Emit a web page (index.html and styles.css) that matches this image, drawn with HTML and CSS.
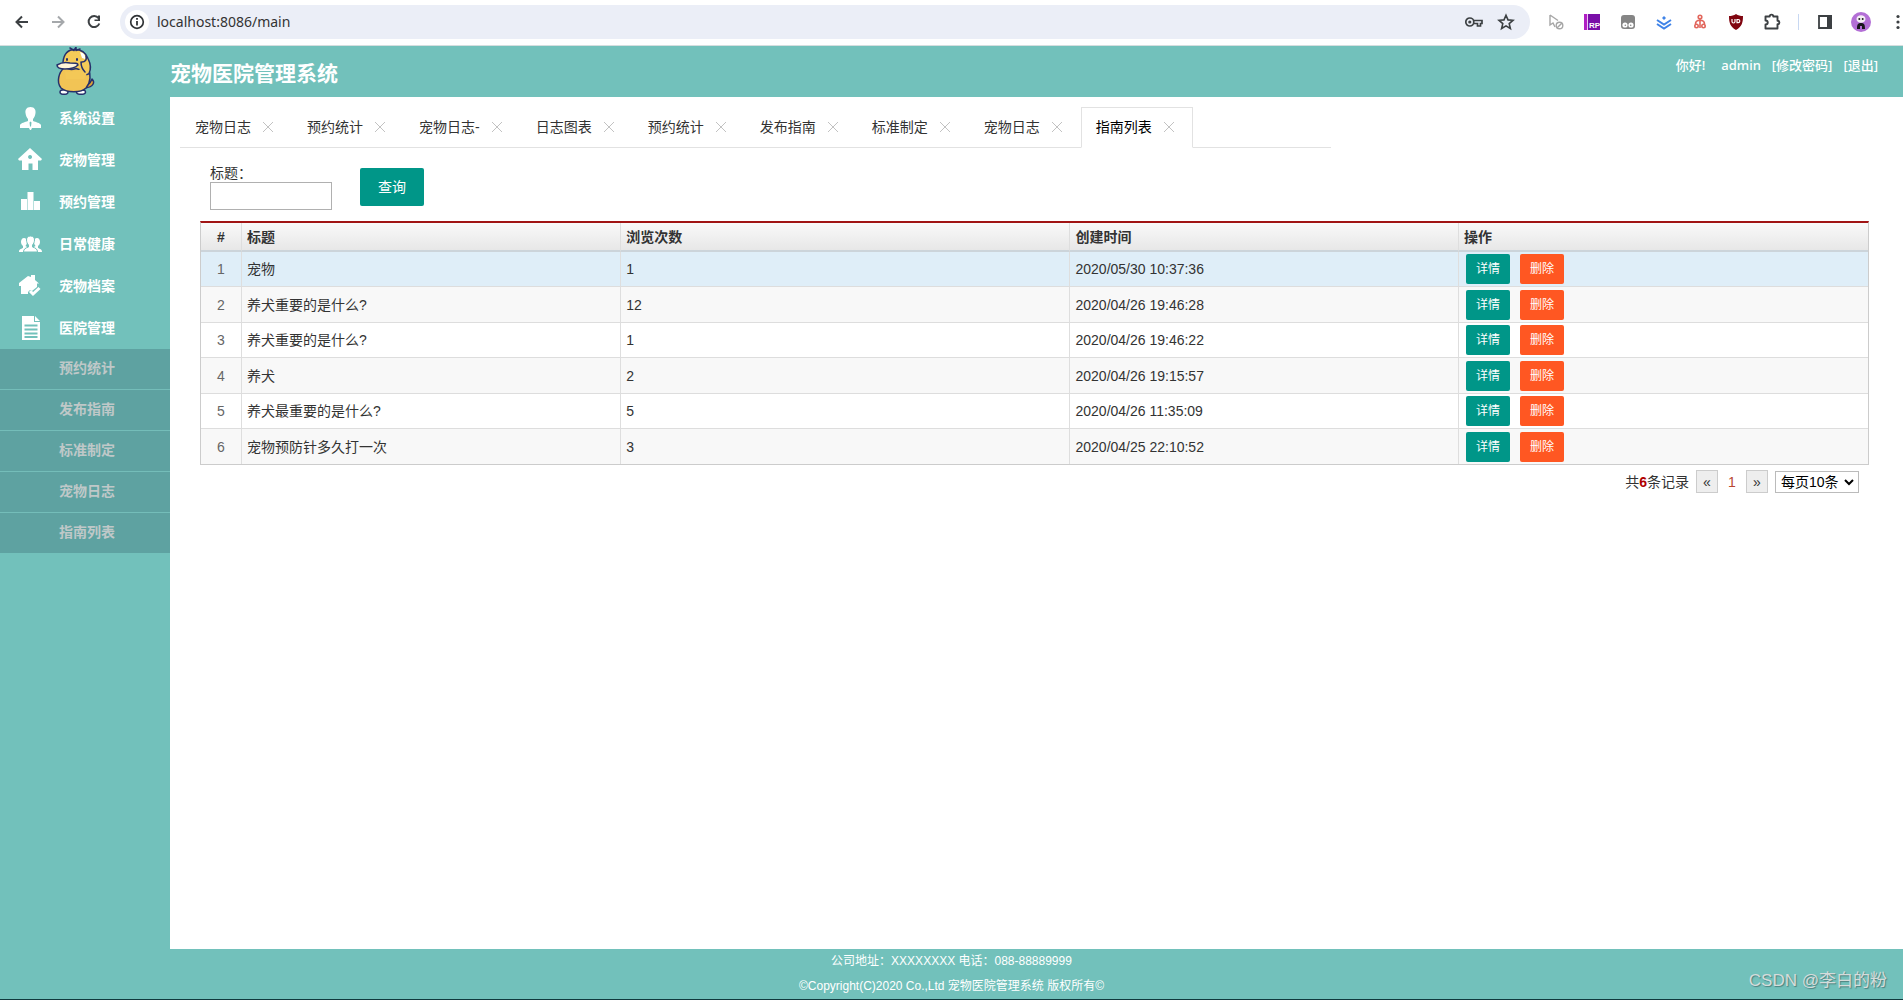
FILE: index.html
```html
<!DOCTYPE html>
<html lang="zh-CN">
<head>
<meta charset="utf-8">
<title>宠物医院管理系统</title>
<link rel="stylesheet" href="styles.css">
</head>
<body>
<div class="toolbar">
  <button class="tool" aria-label="后退"><svg viewBox="0 0 20 20"><path d="M16 10H5M10 4.500 4.500 10l5.500 5.500" fill="none" stroke="#3c4043" stroke-width="2"/></svg></button>
  <button class="tool" aria-label="前进"><svg viewBox="0 0 20 20"><path d="M4 10h11M10 4.500l5.500 5.500-5.500 5.500" fill="none" stroke="#a5a8ab" stroke-width="2"/></svg></button>
  <button class="tool" aria-label="刷新"><svg viewBox="0 0 20 20"><path d="M14.500 6.200A5.500 5.500 0 1 0 15.300 11.500" fill="none" stroke="#3c4043" stroke-width="2"/><path d="M16 3.500V9h-5.500V7.500H14V3.500z" fill="#3c4043"/></svg></button>
  <div class="omnibox">
    <span class="site-info"><svg viewBox="0 0 20 20"><circle cx="10" cy="10" r="6.300" fill="none" stroke="#303336" stroke-width="1.700"/><path d="M10 9v4.500M10 6v1.800" stroke="#303336" stroke-width="1.800"/></svg></span>
    <input class="url" type="text" value="localhost:8086/main" aria-label="地址">
    <svg class="glyph" viewBox="0 0 20 20"><g fill="none" stroke="#3c4043" stroke-width="1.700"><circle cx="5.800" cy="10" r="4"/><path d="M9.500 8.500H18v3h-1.500v2.500h-3v-2.500H9.500"/></g><circle cx="5.800" cy="10" r="1.600" fill="#3c4043"/></svg>
    <svg class="glyph" viewBox="0 0 20 20"><path d="M10 3.300l2 4.600 5 .4-3.800 3.300 1.200 4.900-4.400-2.600-4.400 2.600 1.200-4.900L3 8.300l5-.4z" fill="none" stroke="#3c4043" stroke-width="1.600"/></svg>
  </div>
  <button class="tool" aria-label="指针扩展"><svg viewBox="0 0 20 20"><g fill="none" stroke="#a6a6a6" stroke-width="1.400"><path d="M4 3v10l3-2 2 4M4 3l8 5.500"/><circle cx="13.500" cy="13.500" r="3.300"/><path d="M11.200 15.800l4.600-4.600"/></g></svg></button>
  <button class="tool" aria-label="RP"><svg viewBox="0 0 20 20"><path d="M2 2h16v16H2z" fill="#7a0fa8"/><path d="M2 2h3v16H2z" fill="#b01fc4"/><path d="M5.500 2v16" stroke="#ecc6f5"/><text x="7" y="16" class="rp">RP</text></svg></button>
  <button class="tool" aria-label="脚本扩展"><svg viewBox="0 0 20 20"><rect x="3" y="3" width="14" height="14" rx="3" fill="#858585"/><circle cx="7" cy="13" r="2.600" fill="#fff"/><circle cx="13" cy="13" r="2.600" fill="#fff"/><circle cx="7.300" cy="13.200" r=".8" fill="#858585"/><circle cx="12.700" cy="13.200" r=".8" fill="#858585"/></svg></button>
  <button class="tool" aria-label="下载扩展"><svg viewBox="0 0 20 20"><g fill="none" stroke="#3f83e8" stroke-width="2"><path d="M3 8l7 4.500L17 8M3 12l7 4.500 7-4.500"/></g><path d="M10 4l2 2-2 2-2-2z" fill="#3f83e8"/></svg></button>
  <button class="tool" aria-label="节点扩展"><svg viewBox="0 0 20 20"><g fill="none" stroke="#e2665c" stroke-width="1.600"><circle cx="10" cy="5" r="1.800"/><path d="M10 7v9M5.500 12c0-5 9-5 9 0"/><circle cx="6.500" cy="14" r="1.700"/><circle cx="13.500" cy="14" r="1.700"/></g></svg></button>
  <button class="tool" aria-label="拦截扩展"><svg viewBox="0 0 20 20"><path d="M10 2c2 1.500 4.500 2 7 2 0 6.500-1 10.500-7 14C4 14.500 3 10.500 3 4c2.500 0 5-.5 7-2z" fill="#800610"/><path d="M6 7v2.500a1.500 1.500 0 0 0 3 0V7M11 7.500v3.200h1.200a1.600 1.600 0 0 0 0-3.200z" fill="none" stroke="#fff" stroke-width="1.200"/></svg></button>
  <button class="tool" aria-label="扩展程序"><svg viewBox="0 0 20 20"><path d="M3.500 4.500h4.200c0-2.500 3.600-2.500 3.600 0h4.200v4.200c2.500 0 2.500 3.600 0 3.600v4.200h-12v-4c3 0 3-4 0-4z" fill="none" stroke="#3c4043" stroke-width="1.900" stroke-linejoin="round"/></svg></button>
  <span class="divider"></span>
  <button class="tool" aria-label="侧边栏"><svg viewBox="0 0 20 20"><path d="M4 4h12v12H4z" fill="none" stroke="#3c4043" stroke-width="1.800"/><path d="M12 3h5v14h-5z" fill="#3c4043"/></svg></button>
  <button class="tool" aria-label="个人资料"><svg viewBox="0 0 20 20"><circle cx="10" cy="10" r="10" fill="#b36fd6"/><ellipse cx="10" cy="7" rx="4.500" ry="3.800" fill="#f4eef5"/><circle cx="8.300" cy="7" r="1" fill="#222"/><circle cx="11.700" cy="7" r="1" fill="#222"/><path d="M6 17c0-4 .5-6 4-6s4 2 4 6h-3v-3H9v3z" fill="#19161c"/></svg></button>
  <button class="tool tool-edge" aria-label="菜单"><svg viewBox="0 0 16 20"><g fill="#3c4043"><circle cx="11" cy="4.500" r="1.600"/><circle cx="11" cy="10" r="1.600"/><circle cx="11" cy="15.500" r="1.600"/></g></svg></button>
</div>

<header class="header">
  <div class="logo"><svg viewBox="0 0 40 48">
    <g stroke="#26306b" stroke-width="1.500" stroke-linejoin="round" stroke-linecap="round">
      <path d="M30 38c4 0 5-4 6-6 3 3 2 8-7 9z" fill="#e0a233"/>
      <ellipse cx="8" cy="45" rx="4" ry="2.300" fill="#fff"/><ellipse cx="25" cy="45" rx="4.500" ry="2.300" fill="#fff"/>
      <path d="M8 21c-5 4-8 14-3 20 6 5 20 5 25 0 5-6 5-14 2-20z" fill="#f2c455"/>
      <path d="M7 15C8 6 13 2.500 19 2.500c7 0 11 4 13 9 3 6 3 11 1 15-2 2-5 1-7-3l-6-2C13 24 7 21 7 15z" fill="#f6cb58" />
      <path d="M9 24c4 1 14 1 16-3l6 5-3 6H10z" fill="#f4c857" stroke="none"/>
      <path d="M24 5c4 1 6 4 5 7l-3-1z" fill="#fff" stroke="none"/>
      <path d="M1 18c5-3 9-3 13-2 5 0 8 0 8 2-3 3-8 4-13 4-5 0-8-1-8-4z" fill="#fff4d8"/>
      <path d="M30 9c1 4-1 6-4 6M25 15c0 5 2 8 4 10M14 1l4 2.500L20 0l0 3.500L24 2" fill="none"/>
      <path d="M11 12v1M21 12v1" stroke-width="2"/>
    </g></svg></div>
  <h1 class="title">宠物医院管理系统</h1>
  <div class="user"><span>你好!</span><span class="name">admin</span><a href="#">[修改密码]</a><a href="#">[退出]</a></div>
</header>

<div class="body">
  <nav class="sidebar">
    <a class="item" href="#"><svg viewBox="0 0 24 24"><path d="M12.500 1c4 0 5.500 3 5 6-.3 3-1.500 5-2.500 6v2c3 1 7 2 8 4v3h-9l-1 2h-1l-1-2H2v-3c1-2 5-3 8-4v-2c-1-1-2.200-3-2.500-6-.5-3 1-6 5-6z"/><path class="cut" d="M12.500 15.500l1 1-.5 4h-1l-.500-4z"/></svg>系统设置</a>
    <a class="item" href="#"><svg viewBox="0 0 24 24"><path fill-rule="evenodd" d="M12 0l12 11-1 1.500h-3V22h-5.500v-6.500h-4V22H4v-9.500H1L0 11zM12 7a2 2 0 1 0 .1 0z"/></svg>宠物管理</a>
    <a class="item" href="#"><svg viewBox="0 0 24 24"><path d="M3 9h6v11H3zM9.500 2h6v18h-6zM16 11h6v9h-6z"/></svg>预约管理</a>
    <a class="item" href="#"><svg viewBox="0 0 24 24"><path d="M6 6c2 0 3 2 3 4s-1 3-1.500 4c1 .6 2 1 2 2L6 20H1c0-3 2-3 4-4v-2c-1-1-2-2-2-4s1-4 3-4zM19 6c-2 0-3 2-3 4s1 3 1.500 4c-1 .6-2 1-2 2l3.500 4h5c0-3-2-3-4-4v-2c1-1 2-2 2-4s-1-4-3-4z"/><path class="ring" d="M12.500 4c3 0 4 2 4 4s-1 4-2 5v2c3 1 5 2 5 5H5.500c0-3 2-4 5-5v-2c-1-1-2-3-2-5s1-4 4-4z"/></svg>日常健康</a>
    <a class="item" href="#"><svg viewBox="0 0 24 24"><path d="M10 2l3 1V1h4v5l4 3.500h-2V13l-5 4-2-1-2 2v2H3v-8H1V9z"/><path d="M12 17l3 3 6.500-6" fill="none" stroke="#fff" stroke-width="3"/></svg>宠物档案</a>
    <a class="item" href="#"><svg viewBox="0 0 24 24"><path d="M4 0h12v6h6v18H4zM17 0l5 5h-5z"/><path class="lines" d="M6.500 9.500h13M6.500 13.500h13M6.500 17.500h13M6.500 21h13"/></svg>医院管理</a>
    <div class="submenu">
      <a href="#">预约统计</a><a href="#">发布指南</a><a href="#">标准制定</a><a href="#">宠物日志</a><a href="#">指南列表</a>
    </div>
  </nav>

  <main class="main">
    <ul class="tabs">
      <li>宠物日志<button aria-label="关闭"></button></li>
      <li>预约统计<button aria-label="关闭"></button></li>
      <li>宠物日志-<button aria-label="关闭"></button></li>
      <li>日志图表<button aria-label="关闭"></button></li>
      <li>预约统计<button aria-label="关闭"></button></li>
      <li>发布指南<button aria-label="关闭"></button></li>
      <li>标准制定<button aria-label="关闭"></button></li>
      <li>宠物日志<button aria-label="关闭"></button></li>
      <li class="active">指南列表<button aria-label="关闭"></button></li>
    </ul>
    <form class="search">
      <div class="field"><label for="q">标题：</label><input id="q" type="text"></div>
      <button class="btn btn-query" type="button">查询</button>
    </form>
    <table class="grid">
      <colgroup><col class="c-no"><col class="c-title"><col class="c-views"><col class="c-time"><col></colgroup>
      <thead><tr><th>#</th><th>标题</th><th>浏览次数</th><th>创建时间</th><th>操作</th></tr></thead>
      <tbody>
        <tr class="selected"><td>1</td><td>宠物</td><td>1</td><td>2020/05/30 10:37:36</td><td><div class="ops"><button class="btn">详情</button><button class="btn btn-danger">删除</button></div></td></tr>
        <tr><td>2</td><td>养犬重要的是什么?</td><td>12</td><td>2020/04/26 19:46:28</td><td><div class="ops"><button class="btn">详情</button><button class="btn btn-danger">删除</button></div></td></tr>
        <tr><td>3</td><td>养犬重要的是什么?</td><td>1</td><td>2020/04/26 19:46:22</td><td><div class="ops"><button class="btn">详情</button><button class="btn btn-danger">删除</button></div></td></tr>
        <tr><td>4</td><td>养犬</td><td>2</td><td>2020/04/26 19:15:57</td><td><div class="ops"><button class="btn">详情</button><button class="btn btn-danger">删除</button></div></td></tr>
        <tr><td>5</td><td>养犬最重要的是什么?</td><td>5</td><td>2020/04/26 11:35:09</td><td><div class="ops"><button class="btn">详情</button><button class="btn btn-danger">删除</button></div></td></tr>
        <tr><td>6</td><td>宠物预防针多久打一次</td><td>3</td><td>2020/04/25 22:10:52</td><td><div class="ops"><button class="btn">详情</button><button class="btn btn-danger">删除</button></div></td></tr>
      </tbody>
    </table>
    <div class="pager">
      <span>共<b>6</b>条记录</span>
      <button aria-label="上一页">«</button><span class="current">1</span><button aria-label="下一页">»</button>
      <div class="size"><select aria-label="每页条数"><option>每页10条</option></select><svg viewBox="0 0 10 8"><path d="M1 2l4 4 4-4" fill="none" stroke="#000" stroke-width="2"/></svg></div>
    </div>
  </main>
</div>

<footer class="footer">
  <p>公司地址：XXXXXXXX 电话：088-88889999</p>
  <p>©Copyright(C)2020 Co.,Ltd 宠物医院管理系统 版权所有©</p>
  <span class="watermark">CSDN @李白的粉</span>
</footer>
</body>
</html>
```
FILE: styles.css
```css
* { box-sizing: border-box; }

body {
  margin: 0;
  min-height: 100vh;
  display: flex;
  flex-direction: column;
  background: #72c1bb;
  color: #333;
  font: 14px/20px "Liberation Sans", "Noto Sans CJK SC", sans-serif;
}

button, input, select { font: inherit; color: inherit; margin: 0; }
button { border: 0; padding: 0; background: none; }
a { color: inherit; text-decoration: none; }
svg { display: block; }

/* Browser bar */
.toolbar {
  display: flex;
  align-items: center;
  gap: 16px;
  height: 46px;
  padding: 0 0 2px 12px;
  background: #fff;
  border-bottom: 1px solid #d5dedf;
}
.tool { flex: none; width: 20px; height: 20px; }
.tool-edge { width: 16px; }
.rp { font: bold 8px "Liberation Sans", sans-serif; fill: #fff; }
.divider { width: 1px; height: 16px; background: #c8d8f2; }
.omnibox {
  flex: 1;
  display: flex;
  align-items: center;
  gap: 12px;
  height: 34px;
  padding: 0 14px 0 5px;
  border-radius: 17px;
  background: #ebeef7;
}
.site-info { padding: 2px; border-radius: 12px; background: #fff; }
.site-info svg, .glyph { width: 20px; height: 20px; }
.url {
  flex: 1;
  margin-left: -4px;
  padding: 0;
  border: 0;
  background: none;
  font: 14px/20px "Noto Sans", sans-serif;
}

/* Page header */
.header { display: flex; color: #fff; height: 51px; }
.logo { width: 170px; padding: 1px 0 0 56px; }
.logo svg { width: 40px; height: 48px; }
.title { flex: 1; margin: 0; padding-top: 5px; font-size: 21px; line-height: 46px; }
.user {
  display: flex;
  gap: 10px;
  padding: 9px 25px 0 0;
  font: 500 13px/20px "Noto Sans", "Noto Sans CJK SC", sans-serif;
}
.user a { padding-left: 1px; }
.name { margin-left: 6px; }

/* Side menu */
.body { flex: 1; display: flex; }
.sidebar { flex: none; width: 170px; color: #fff; font-weight: bold; }
.item { display: flex; align-items: center; gap: 17px; height: 42px; padding-left: 18px; }
.item svg { width: 24px; height: 24px; fill: #fff; }
.item .cut { fill: #72c1bb; }
.item .ring { stroke: #72c1bb; stroke-width: 1; }
.item .lines { stroke: #72c1bb; stroke-width: 2; }
.submenu { background: #5ea2a1; color: #bfc8c8; }
.submenu a { display: block; padding: 0 0 2px 59px; line-height: 38px; border-bottom: 1px solid #74bdb9; }
.submenu a:last-child { border-bottom: 0; }

/* Content */
.main { flex: 1; min-width: 0; padding: 10px 0 20px; background: #fff; }
.tabs {
  display: flex;
  width: 66.4%;
  height: 41px;
  margin: 0 0 0 10px;
  padding: 0;
  list-style: none;
  border-bottom: 1px solid #e2e2e2;
}
.tabs li {
  display: flex;
  align-items: center;
  gap: 8px;
  flex: none;
  height: 41px;
  padding: 0 15px 2px;
}
.tabs button {
  width: 18px;
  height: 18px;
  background:
    linear-gradient(45deg, transparent 47%, #c2c2c2 47% 54%, transparent 54%) center / 10px 10px no-repeat,
    linear-gradient(-45deg, transparent 47%, #c2c2c2 47% 54%, transparent 54%) center / 10px 10px no-repeat;
}
.tabs .active {
  padding: 0 14px 2px;
  color: #000;
  border: 1px solid #e2e2e2;
  border-bottom-color: #fff;
}

.search { display: flex; align-items: flex-start; gap: 28px; padding: 16px 40px 0; }
.field { display: flex; flex-direction: column; width: 122px; }
.field label { line-height: 18px; }
.field input { height: 28px; border: 1px solid #b0b0b0; padding: 0 4px; background: #fff; }
.btn {
  width: 44px;
  height: 30px;
  border-radius: 2px;
  background: #009688;
  color: #fff;
  font-size: 12px;
}
.btn-danger { background: #ff5722; }
.btn-query { width: 64px; height: 38px; margin-top: 4px; font-size: 14px; }

.grid {
  width: calc(100% - 64px);
  margin: 11px 34px 0 30px;
  table-layout: fixed;
  border-collapse: separate;
  border-spacing: 0;
  border: 1px solid #ccc;
  border-top: 2px solid #a01414;
}
.c-no { width: 41px; }
.c-title { width: 22.75%; }
.c-views { width: 26.95%; }
.c-time { width: 23.3%; }
.grid th, .grid td { padding: 0 0 0 5px; text-align: left; border-right: 1px solid #dedede; }
.grid th { height: 29px; background: linear-gradient(#f9f9f9, #e7e7e7); border-bottom: 2px solid #ccd4da; }
.grid td { height: 35px; border-bottom: 1px solid #ddd; }
.grid tr:nth-child(even) td { height: 36px; background: #f8f8f8; }
.grid tr.selected td { background: #dfeef8; }
.grid th:first-child, .grid td:first-child { padding: 0; text-align: center; }
.grid td:first-child { color: #666; }
.grid th:last-child, .grid td:last-child { border-right: 0; }
.grid tbody tr:last-child td { height: 35px; border-bottom: 0; }
.ops { display: flex; gap: 10px; padding-left: 2px; }

.pager { display: flex; align-items: center; justify-content: flex-end; gap: 7px; padding: 5px 44px 0 0; }
.pager b { color: #b00000; }
.pager button { width: 22px; height: 23px; border: 1px solid #ccc; background: #eee; }
.pager .current { width: 14px; text-align: center; color: #b8472f; }
.size { display: grid; align-items: center; }
.size select, .size svg { grid-area: 1 / 1; }
.size select {
  appearance: none;
  width: 84px;
  height: 22px;
  padding: 0 0 0 5px;
  border: 1px solid #bbb;
  border-radius: 0;
  background: #fff;
  color: #000;
}
.size svg { justify-self: end; width: 10px; height: 8px; margin-right: 5px; pointer-events: none; }

.footer {
  position: relative;
  padding-bottom: 1px;
  border-bottom: 1px solid #10393d;
  color: #fff;
  font-size: 12px;
  line-height: 24px;
  text-align: center;
}
.footer p { margin: 0; }
.footer p + p { padding-top: 1px; }
.watermark {
  position: absolute;
  right: 16px;
  bottom: 6px;
  color: #d5dcdb;
  font-size: 17px;
  text-shadow: 1px 1px 1px #4d7f7c;
}
```
